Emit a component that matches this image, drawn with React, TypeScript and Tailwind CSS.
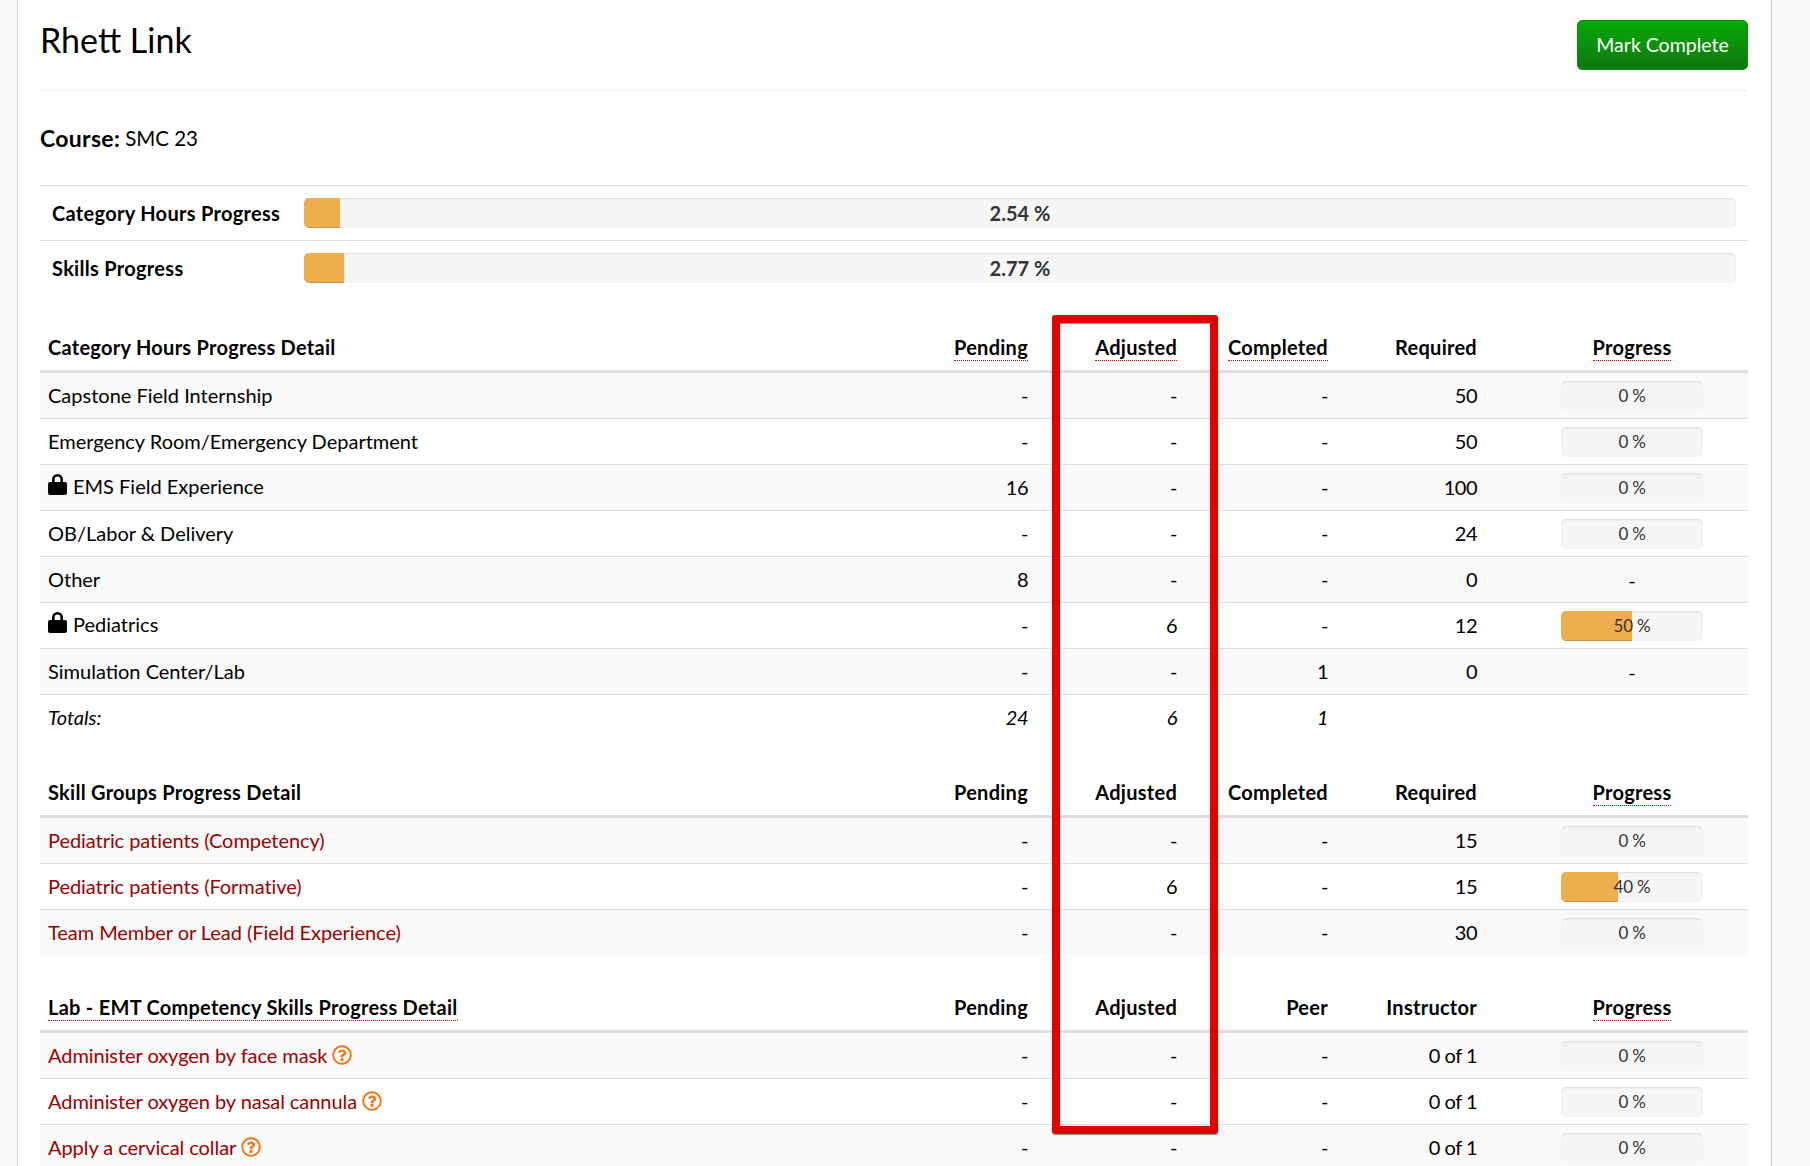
import React from 'react';
import { FaRegQuestionCircle } from 'react-icons/fa';

interface Row {
  name: string;
  pending: string;
  adjusted: string;
  completed: string;
  required: string;
  progress: number | null;
  locked?: boolean;
  help?: boolean;
}

interface Head {
  label: string;
  dotted?: boolean;
}

const categoryRows: Row[] = [
  { name: 'Capstone Field Internship', pending: '-', adjusted: '-', completed: '-', required: '50', progress: 0 },
  { name: 'Emergency Room/Emergency Department', pending: '-', adjusted: '-', completed: '-', required: '50', progress: 0 },
  { name: 'EMS Field Experience', pending: '16', adjusted: '-', completed: '-', required: '100', progress: 0, locked: true },
  { name: 'OB/Labor & Delivery', pending: '-', adjusted: '-', completed: '-', required: '24', progress: 0 },
  { name: 'Other', pending: '8', adjusted: '-', completed: '-', required: '0', progress: null },
  { name: 'Pediatrics', pending: '-', adjusted: '6', completed: '-', required: '12', progress: 50, locked: true },
  { name: 'Simulation Center/Lab', pending: '-', adjusted: '-', completed: '1', required: '0', progress: null },
];

const skillRows: Row[] = [
  { name: 'Pediatric patients (Competency)', pending: '-', adjusted: '-', completed: '-', required: '15', progress: 0 },
  { name: 'Pediatric patients (Formative)', pending: '-', adjusted: '6', completed: '-', required: '15', progress: 40 },
  { name: 'Team Member or Lead (Field Experience)', pending: '-', adjusted: '-', completed: '-', required: '30', progress: 0 },
];

const labRows: Row[] = [
  { name: 'Administer oxygen by face mask', pending: '-', adjusted: '-', completed: '-', required: '0 of 1', progress: 0, help: true },
  { name: 'Administer oxygen by nasal cannula', pending: '-', adjusted: '-', completed: '-', required: '0 of 1', progress: 0, help: true },
  { name: 'Apply a cervical collar', pending: '-', adjusted: '-', completed: '-', required: '0 of 1', progress: 0, help: true },
];

const LockIcon = () => (
  <svg viewBox="0 0 19 21" className="mr-[6px] mb-[3px] h-[21px] w-[19px] shrink-0 fill-black">
    <path
      fillRule="evenodd"
      d="M4 8V5.5a5.5 5.5 0 0 1 11 0V8h2a2 2 0 0 1 2 2v9a2 2 0 0 1-2 2H2a2 2 0 0 1-2-2v-9a2 2 0 0 1 2-2zM6.6 8h5.8V5.5a2.9 2.9 0 0 0-5.8 0z"
    />
  </svg>
);

const Label: React.FC<Head> = ({ label, dotted }) => (
  <span className={dotted ? 'border-b border-dotted border-[#d40000] pb-px' : ''}>{label}</span>
);

const MiniBar: React.FC<{ value: number | null }> = ({ value }) => {
  if (value === null) return <span>-</span>;
  return (
    <div className="relative mx-auto h-[30px] w-[142px] overflow-hidden rounded-[5px] bg-[#f5f5f5] shadow-[inset_0_1px_2px_rgba(0,0,0,0.1)]">
      <div
        className="h-full bg-[#f0ad4e] shadow-[inset_0_-1px_0_rgba(0,0,0,0.15)]"
        style={{ width: `${value}%` }}
      />
      <span className="absolute inset-0 flex items-center justify-center text-[17px] tracking-[-0.2px] text-[#333]">
        {value} %
      </span>
    </div>
  );
};

const DetailTable: React.FC<{
  heads: Head[];
  rows: Row[];
  link?: boolean;
  totals?: string[];
  className?: string;
}> = ({ heads, rows, link, totals, className }) => (
  <table className={`w-full table-fixed border-separate border-spacing-0 ${className ?? ''}`}>
    <colgroup>
      <col className="w-[846px]" />
      <col className="w-[150px]" />
      <col className="w-[149px]" />
      <col className="w-[151px]" />
      <col className="w-[149px]" />
      <col />
    </colgroup>
    <thead>
      <tr>
        {heads.map((h, i) => (
          <th
            key={h.label}
            className={`h-[49px] border-b-[3px] border-[#ddd] px-2 font-bold tracking-[0.27px] text-black ${
              i === 0 ? 'text-left' : i === 5 ? 'pl-[39px] text-center' : 'text-right'
            }`}
          >
            <Label {...h} />
          </th>
        ))}
      </tr>
    </thead>
    <tbody>
      {rows.map((r, i) => {
        const line = i < rows.length - 1 || totals ? 'border-b border-[#ddd]' : 'border-b border-transparent';
        return (
          <tr key={r.name} className={i % 2 === 0 ? 'bg-[#f9f9f9]' : ''}>
            <td className={`h-[46px] px-2 pb-[2px] ${line}`}>
              <span className={`inline-flex items-center ${link ? 'text-[#9c0000] tracking-[-0.06px]' : ''}`}>
                {r.locked && <LockIcon />}
                {r.name}
                {r.help && <FaRegQuestionCircle className="ml-[5px] text-[20px] text-[#f57310]" />}
              </span>
            </td>
            <td className={`px-2 pb-[2px] text-right tracking-[-0.5px] ${line}`}>{r.pending}</td>
            <td className={`px-2 pb-[2px] text-right tracking-[-0.5px] ${line}`}>{r.adjusted}</td>
            <td className={`px-2 pb-[2px] text-right tracking-[-0.5px] ${line}`}>{r.completed}</td>
            <td className={`px-2 pb-[2px] text-right tracking-[-0.5px] ${line}`}>{r.required}</td>
            <td className={`pr-2 pl-[39px] text-center ${line}`}>
              <MiniBar value={r.progress} />
            </td>
          </tr>
        );
      })}
      {totals && (
        <tr className="italic">
          {totals.map((t, i) => (
            <td key={i} className={`h-[46px] px-2 pb-[2px] ${i === 0 ? 'text-left' : 'text-right tracking-[-0.5px]'}`}>
              {t}
            </td>
          ))}
        </tr>
      )}
    </tbody>
  </table>
);

const SummaryRow: React.FC<{ label: string; value: number }> = ({ label, value }) => (
  <div className="flex h-[55px] items-center border-t border-[#ddd] pr-3 pl-3">
    <div className="w-[252px] text-[20px] font-bold tracking-[0.3px] text-black">{label}</div>
    <div className="relative h-[30px] flex-1 overflow-hidden rounded-[5px] bg-[#f5f5f5] shadow-[inset_0_1px_2px_rgba(0,0,0,0.1)]">
      <div
        className="h-full bg-[#f0ad4e] shadow-[inset_0_-1px_0_rgba(0,0,0,0.15)]"
        style={{ width: `${value}%` }}
      />
      <span className="absolute inset-0 flex items-center justify-center text-[20px] font-bold text-[#333]">
        {value} %
      </span>
    </div>
  </div>
);

export default function App() {
  return (
    <div className="relative h-[1166px] overflow-hidden bg-[#fafafa] font-['Lato',sans-serif] text-[20px] text-black">
      <div className="mr-[38px] ml-[17px] h-full border-x border-[#ccc] bg-white pr-[23px] pl-[22px]">
        <div className="flex h-[91px] items-start justify-between border-b border-[#eee] pt-5">
          <h1 className="text-[34px] leading-[40px]">Rhett Link</h1>
          <button className="h-[50px] w-[171px] rounded-[5px] border border-[#0a8f0a] bg-gradient-to-b from-[#05aa05] to-[#0f780f] text-[19.5px] text-white">
            Mark Complete
          </button>
        </div>

        <div className="flex h-[94px] items-center">
          <b className="mr-[5px] text-[23px] tracking-[0.3px]">Course:</b>
          <span className="text-[20.5px]">SMC 23</span>
        </div>

        <SummaryRow label="Category Hours Progress" value={2.54} />
        <SummaryRow label="Skills Progress" value={2.77} />

        <DetailTable
          className="mt-[29px]"
          heads={[
            { label: 'Category Hours Progress Detail' },
            { label: 'Pending', dotted: true },
            { label: 'Adjusted', dotted: true },
            { label: 'Completed', dotted: true },
            { label: 'Required' },
            { label: 'Progress', dotted: true },
          ]}
          rows={categoryRows}
          totals={['Totals:', '24', '6', '1', '', '']}
        />

        <DetailTable
          className="mt-7"
          link
          heads={[
            { label: 'Skill Groups Progress Detail' },
            { label: 'Pending' },
            { label: 'Adjusted' },
            { label: 'Completed' },
            { label: 'Required' },
            { label: 'Progress', dotted: true },
          ]}
          rows={skillRows}
        />

        <DetailTable
          className="mt-7"
          link
          heads={[
            { label: 'Lab - EMT Competency Skills Progress Detail', dotted: true },
            { label: 'Pending' },
            { label: 'Adjusted' },
            { label: 'Peer' },
            { label: 'Instructor' },
            { label: 'Progress', dotted: true },
          ]}
          rows={labRows}
        />
      </div>

      {/* red highlight drawn over the Adjusted column */}
      <div className="absolute top-[315px] left-[1052px] h-[819px] w-[166px] rounded-[3px] border-[8px] border-[#e30000] shadow-[0_1px_1px_rgba(0,0,0,0.45),inset_0_1px_1px_rgba(0,0,0,0.4)]" />
    </div>
  );
}
